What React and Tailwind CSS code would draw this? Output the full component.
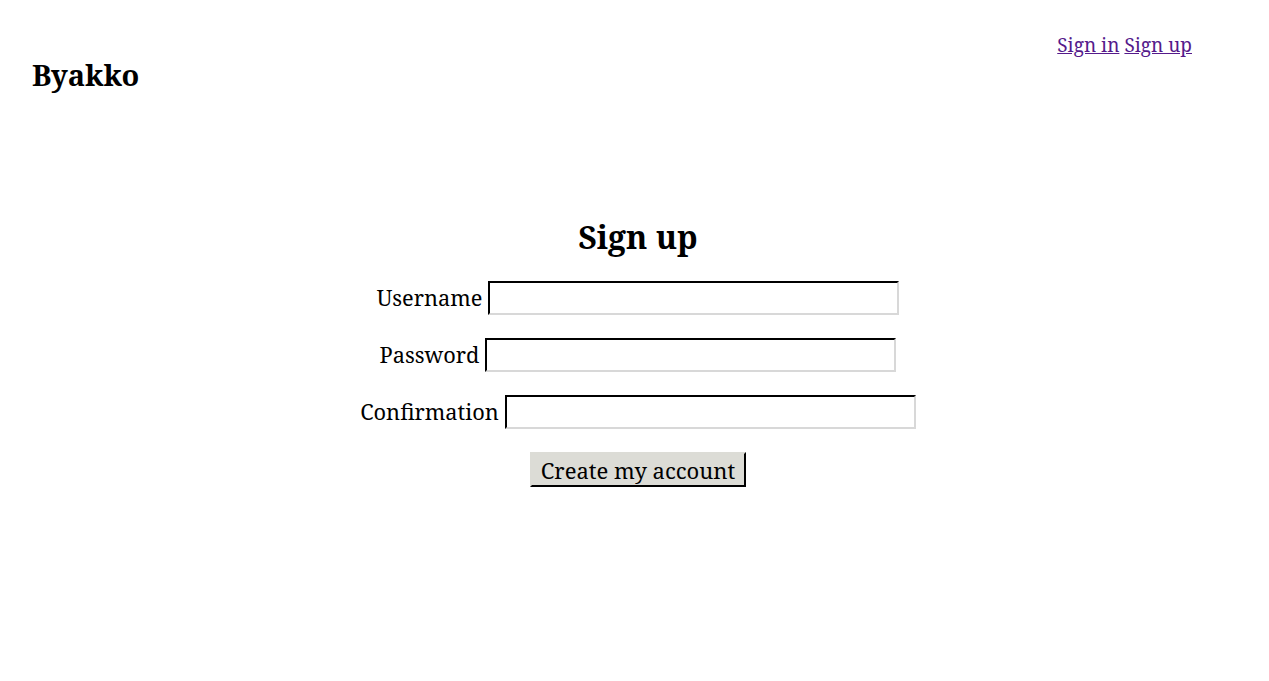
import React from 'react'

const serif = { fontFamily: '"Noto Serif", "DejaVu Serif", serif' }

const Field = ({ label, type }) => (
  <div className="flex items-center justify-center gap-[6px]">
    <label className="text-[21.75px] leading-none">{label}</label>
    <input
      type={type}
      className="w-[411px] h-[34px] bg-white border-2 border-t-black border-l-black border-r-[#d8d8d8] border-b-[#d8d8d8] px-1 outline-none"
    />
  </div>
)

const App = () => {
  return (
    <div className="w-[1269px] h-[681px] bg-white text-black relative" style={serif}>
      <header className="flex items-start justify-between px-[32px] pt-[30px]">
        <h1 className="text-[29px] font-bold mt-[23px]">Byakko</h1>
        <nav className="text-[19px] mr-[45px] flex gap-[5px] mt-[1px]">
          <a href="#" className="underline text-[#551a8b]">Sign in</a>
          <a href="#" className="underline text-[#551a8b]">Sign up</a>
        </nav>
      </header>

      <main className="flex flex-col items-center mt-[124px] pl-[7px]">
        <h2 className="text-[32px] font-bold leading-none mb-[28px]">Sign up</h2>
        <form className="flex flex-col items-center gap-[23px]">
          <Field label="Username" type="text" />
          <Field label="Password" type="password" />
          <Field label="Confirmation" type="password" />
          <button
            type="submit"
            className="text-[22px] px-[9px] h-[35px] bg-[#dcdcd6] border-2 border-t-[#dcdcd6] border-l-[#dcdcd6] border-r-black border-b-black"
          >
            Create my account
          </button>
        </form>
      </main>
    </div>
  )
}

export default App
